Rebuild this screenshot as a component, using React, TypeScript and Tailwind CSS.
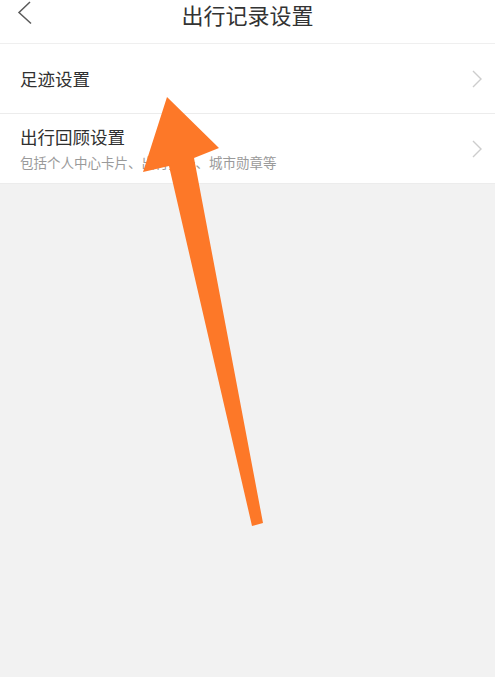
const font = { fontFamily: '"Noto Sans CJK SC", "Noto Sans", sans-serif' };

function Chevron() {
  return (
    <svg width="12" height="20" viewBox="0 0 12 20" fill="none">
      <polyline points="2,2 10,10 2,18" stroke="#cdcdcd" strokeWidth="1.4" strokeLinejoin="miter" />
    </svg>
  );
}

function Row({ title, subtitle }: { title: string; subtitle?: string }) {
  return (
    <div className="flex items-center justify-between pl-5 pr-[12px] bg-white border-b border-[#ececec] h-[70px]">
      <div className="flex flex-col">
        <span className="text-[17.5px] leading-6 text-[#303030]">{title}</span>
        {subtitle && <span className="text-[13.5px] leading-5 mt-[3px] text-[#9a9a9a]">{subtitle}</span>}
      </div>
      <Chevron />
    </div>
  );
}

export default function App() {
  return (
    <div className="relative w-[495px] h-[677px] bg-[#f2f2f2] overflow-hidden" style={font}>
      {/* header, top cut off in the shot */}
      <header className="relative h-[44px] bg-white border-b border-[#efefef] flex justify-center pt-[2px]">
        <svg className="absolute left-[16px] top-[1px]" width="18" height="24" viewBox="0 0 18 24" fill="none">
          <polyline points="14,1 3,11.5 15,22.5" stroke="#5a5a5a" strokeWidth="1.5" />
        </svg>
        <span className="text-[22px] leading-[24px] text-[#333]">出行记录设置</span>
      </header>

      <Row title="足迹设置" />
      <Row title="出行回顾设置" subtitle="包括个人中心卡片、出行报告、城市勋章等" />

      {/* annotation arrow */}
      <svg className="absolute inset-0 pointer-events-none" width="495" height="677" viewBox="0 0 495 677">
        <polygon
          points="167,97 219,148 194,158 263,523 252,526 169,166 143,172"
          fill="#fd7828"
        />
      </svg>
    </div>
  );
}
